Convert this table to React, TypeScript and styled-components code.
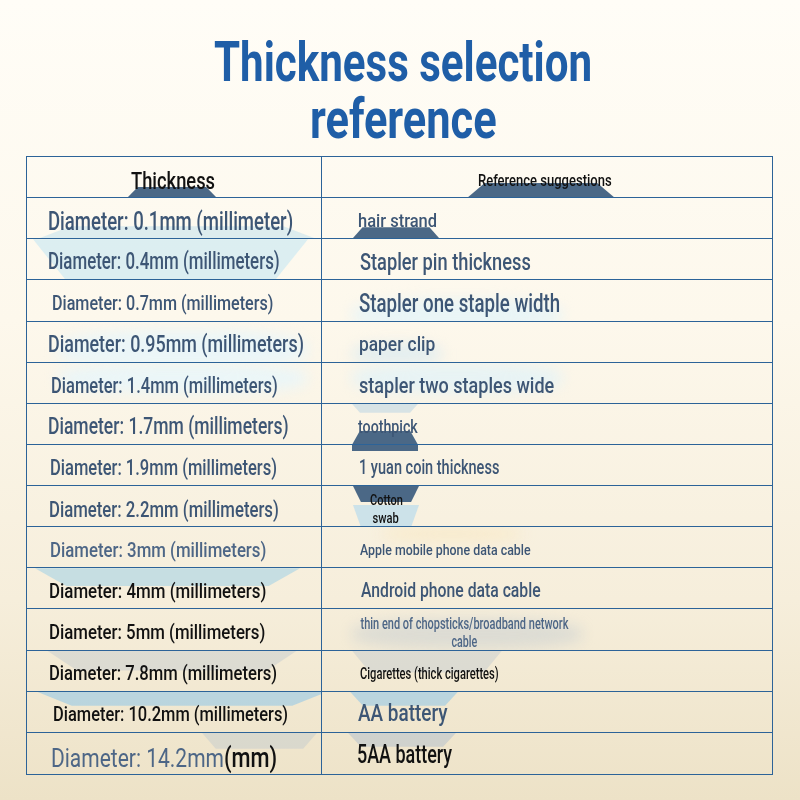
import React, { useLayoutEffect, useRef, useState } from 'react';
import styled, { createGlobalStyle } from 'styled-components';

const GlobalStyle = createGlobalStyle`
  html, body {
    margin: 0;
    padding: 0;
  }
  body {
    font-family: Roboto, "Liberation Sans", sans-serif;
  }
`;

const SLATE = '#3d5675';
const SLATE_LIGHT = '#4d6686';
const INK = '#111111';
const LINE = '#2c6398';

const Page = styled.div`
  width: 800px;
  height: 800px;
  box-sizing: border-box;
  padding: 34px 0 0 26px;
  background: linear-gradient(180deg, #fffdf7 0%, #fdf8ec 40%, #f6eedb 75%, #ede2c7 100%);
  display: flex;
  flex-direction: column;
  overflow: hidden;
`;

const Title = styled.h1`
  margin: 0 0 8px -26px;
  padding-left: 6px;
  width: 800px;
  box-sizing: border-box;
  display: flex;
  flex-direction: column;
  align-items: center;
  color: #1f5ea7;
  font-family: Roboto, "Liberation Sans", sans-serif;
  font-weight: 700;
  font-size: 55px;
  line-height: 57px;
`;

// Box of a fixed width whose text is squeezed horizontally to fill it,
// the reference uses a condensed face that isn't installed here.
const FitBox = styled.span<{ $w: number; $center?: boolean }>`
  position: relative;
  z-index: 1;
  display: inline-flex;
  justify-content: ${({ $center }) => ($center ? 'center' : 'flex-start')};
  width: ${({ $w }) => $w}px;
  flex-shrink: 0;
  white-space: nowrap;
`;

const FitInner = styled.span<{ $center?: boolean }>`
  display: inline-block;
  flex-shrink: 0;
  transform-origin: ${({ $center }) => ($center ? 'center' : 'left')} center;
`;

const Fit: React.FC<{ w: number; center?: boolean; children: React.ReactNode }> = ({ w, center, children }) => {
  const ref = useRef<HTMLSpanElement>(null);
  const [scale, setScale] = useState(0.75);

  useLayoutEffect(() => {
    const measure = () => {
      if (ref.current && ref.current.offsetWidth > 0) setScale(w / ref.current.offsetWidth);
    };
    measure();
    document.fonts?.ready.then(measure);
  }, [w]);

  return (
    <FitBox $w={w} $center={center}>
      <FitInner ref={ref} $center={center} style={{ transform: `scaleX(${scale})` }}>
        {children}
      </FitInner>
    </FitBox>
  );
};

const Table = styled.div`
  width: 747px;
  height: 619px;
  box-sizing: border-box;
  border: 1px solid ${LINE};
  display: grid;
  grid-template-rows: repeat(15, 1fr);
`;

const Row = styled.div<{ $last?: boolean }>`
  display: grid;
  grid-template-columns: 295px 1fr;
  border-bottom: ${({ $last }) => ($last ? 'none' : `1px solid ${LINE}`)};
  min-height: 0;
`;

const Cell = styled.div<{
  $pad: number;
  $size: number;
  $color: string;
  $weight?: number;
  $divider?: boolean;
  $lift?: number;
}>`
  position: relative;
  display: flex;
  align-items: center;
  padding-left: ${({ $pad }) => $pad}px;
  padding-top: ${({ $lift }) => $lift ?? 5}px;
  border-right: ${({ $divider }) => ($divider ? `1px solid ${LINE}` : 'none')};
  font-size: ${({ $size }) => $size}px;
  font-weight: ${({ $weight }) => $weight ?? 500};
  color: ${({ $color }) => $color};
  overflow: hidden;
`;

const Stack = styled.span<{ $w: number; $gap: number }>`
  position: relative;
  z-index: 1;
  display: flex;
  flex-direction: column;
  align-items: center;
  width: ${({ $w }) => $w}px;
  line-height: ${({ $gap }) => $gap}px;
`;

const Unit = styled.span`
  color: ${INK};
  font-size: 27px;
  font-weight: 500;
`;

const Blob = styled.span<{
  $left: number;
  $top: number;
  $w: number;
  $h: number;
  $tone: string;
  $shape?: 'dome' | 'bowl' | 'soft';
}>`
  position: absolute;
  left: ${({ $left }) => $left}px;
  top: ${({ $top }) => $top}px;
  width: ${({ $w }) => $w}px;
  height: ${({ $h }) => $h}px;
  background: ${({ $tone }) => $tone};
  clip-path: ${({ $shape }) =>
    $shape === 'dome'
      ? 'polygon(12% 0, 88% 0, 100% 100%, 0 100%)'
      : $shape === 'bowl'
      ? 'polygon(0 0, 100% 0, 88% 100%, 12% 100%)'
      : 'none'};
  border-radius: ${({ $shape }) => ($shape === 'soft' ? '40%' : '0')};
  filter: ${({ $shape }) => ($shape === 'soft' ? 'blur(7px)' : 'none')};
  z-index: 0;
`;

type Deco = { left: number; top: number; w: number; h: number; tone: string; shape?: 'dome' | 'bowl' | 'soft' };

type Side = {
  text: React.ReactNode;
  size: number;
  color: string;
  x: number;
  w: number;
  weight?: number;
  lift?: number;
  raw?: boolean;
};

type Entry = { left: Side; right: Side; leftDeco?: Deco[]; rightDeco?: Deco[] };

const DARK = '#4b6886';
const PALE_GREY = 'rgba(178, 192, 206, 0.35)';
const PALE_BLUE = 'rgba(150, 205, 232, 0.5)';

const LEFT0 = 27;
const RIGHT0 = 322;

const rows: Entry[] = [
  {
    left: { text: 'Thickness', size: 24, color: INK, x: 131, w: 84, lift: 8 },
    right: { text: 'Reference suggestions', size: 17, color: INK, x: 478, w: 134, lift: 6 },
    leftDeco: [{ left: 100, top: 30, w: 90, h: 11, tone: DARK, shape: 'dome' }],
    rightDeco: [{ left: 145, top: 26, w: 148, h: 15, tone: DARK, shape: 'dome' }],
  },
  {
    left: { text: 'Diameter: 0.1mm (millimeter)', size: 25, color: SLATE, x: 48, w: 245, lift: 6 },
    right: { text: 'hair strand', size: 19, color: SLATE, x: 358, w: 79 },
    leftDeco: [{ left: 10, top: 28, w: 280, h: 13, tone: 'rgba(212, 232, 238, 0.8)', shape: 'dome' }],
    rightDeco: [{ left: 30, top: 29, w: 88, h: 12, tone: DARK, shape: 'dome' }],
  },
  {
    left: { text: 'Diameter: 0.4mm (millimeters)', size: 23, color: SLATE, x: 48, w: 232 },
    right: { text: 'Stapler pin thickness', size: 24, color: SLATE, x: 360, w: 171 },
    leftDeco: [{ left: 6, top: 0, w: 275, h: 41, tone: 'rgba(205, 234, 242, 0.7)', shape: 'bowl' }],
  },
  {
    left: { text: 'Diameter: 0.7mm (millimeters)', size: 20, color: SLATE, x: 52, w: 221 },
    right: { text: 'Stapler one staple width', size: 26, color: SLATE, x: 359, w: 201 },
    rightDeco: [{ left: 30, top: 20, w: 210, h: 30, tone: 'rgba(228, 244, 249, 0.8)', shape: 'soft' }],
  },
  {
    left: { text: 'Diameter: 0.95mm (millimeters)', size: 23.5, color: SLATE, x: 48, w: 256 },
    right: { text: 'paper clip', size: 21, color: SLATE, x: 359, w: 76 },
    leftDeco: [{ left: 30, top: 8, w: 250, h: 40, tone: 'rgba(232, 246, 250, 0.85)', shape: 'soft' }],
    rightDeco: [{ left: 30, top: 22, w: 90, h: 20, tone: 'rgba(215, 233, 242, 0.7)', shape: 'soft' }],
  },
  {
    left: { text: 'Diameter: 1.4mm (millimeters)', size: 22.5, color: SLATE, x: 51, w: 227 },
    right: { text: 'stapler two staples wide', size: 22, color: SLATE, x: 359, w: 195 },
    leftDeco: [{ left: 30, top: 0, w: 250, h: 30, tone: 'rgba(232, 246, 250, 0.85)', shape: 'soft' }],
    rightDeco: [{ left: 30, top: 0, w: 210, h: 30, tone: 'rgba(226, 243, 248, 0.8)', shape: 'soft' }],
  },
  {
    left: { text: 'Diameter: 1.7mm (millimeters)', size: 23.5, color: SLATE, x: 48, w: 241 },
    right: { text: 'toothpick', size: 18, color: SLATE, x: 358, w: 60 },
    rightDeco: [
      { left: 30, top: 0, w: 66, h: 9, tone: 'rgba(200, 220, 228, 0.7)', shape: 'bowl' },
      { left: 30, top: 27, w: 66, h: 14, tone: DARK, shape: 'dome' },
    ],
  },
  {
    left: { text: 'Diameter: 1.9mm (millimeters)', size: 22, color: SLATE, x: 50, w: 227 },
    right: { text: '1 yuan coin thickness', size: 19.5, color: SLATE, x: 359, w: 140 },
    rightDeco: [{ left: 30, top: 0, w: 66, h: 6, tone: DARK }],
  },
  {
    left: { text: 'Diameter: 2.2mm (millimeters)', size: 22.5, color: SLATE, x: 49, w: 230 },
    right: {
      text: (
        <Stack $w={64} $gap={18}>
          <Fit w={33} center>
            Cotton
          </Fit>
          <Fit w={26} center>
            swab
          </Fit>
        </Stack>
      ),
      raw: true,
      size: 15,
      color: INK,
      x: 354,
      w: 64,
      lift: 5,
    },
    rightDeco: [
      { left: 31, top: 0, w: 66, h: 16, tone: DARK, shape: 'bowl' },
      { left: 31, top: 19, w: 66, h: 22, tone: 'rgba(185, 220, 236, 0.7)', shape: 'bowl' },
    ],
  },
  {
    left: { text: 'Diameter: 3mm (millimeters)', size: 21, color: SLATE_LIGHT, x: 50, w: 216, lift: 6 },
    right: { text: 'Apple mobile phone data cable', size: 15.5, color: SLATE, x: 360, w: 171 },
    rightDeco: [{ left: 60, top: 0, w: 140, h: 14, tone: 'rgba(250, 228, 180, 0.45)', shape: 'soft' }],
  },
  {
    left: { text: 'Diameter: 4mm (millimeters)', size: 21, color: INK, x: 49, w: 217 },
    right: { text: 'Android phone data cable', size: 19.5, color: SLATE, x: 361, w: 180 },
    leftDeco: [{ left: 8, top: 0, w: 265, h: 18, tone: PALE_BLUE, shape: 'bowl' }],
  },
  {
    left: { text: 'Diameter: 5mm (millimeters)', size: 21, color: INK, x: 49, w: 216 },
    right: {
      text: (
        <Stack $w={208} $gap={18}>
          <Fit w={208} center>
            thin end of chopsticks/broadband network
          </Fit>
          <Fit w={26} center>
            cable
          </Fit>
        </Stack>
      ),
      raw: true,
      size: 16,
      color: SLATE_LIGHT,
      x: 360,
      w: 208,
      lift: 6,
    },
    rightDeco: [{ left: 30, top: 10, w: 230, h: 30, tone: PALE_GREY, shape: 'soft' }],
  },
  {
    left: { text: 'Diameter: 7.8mm (millimeters)', size: 21, color: INK, x: 49, w: 228 },
    right: { text: 'Cigarettes (thick cigarettes)', size: 16, color: INK, x: 360, w: 139 },
    leftDeco: [{ left: 20, top: 0, w: 250, h: 20, tone: PALE_GREY, shape: 'bowl' }],
    rightDeco: [{ left: 30, top: 0, w: 150, h: 22, tone: PALE_GREY, shape: 'bowl' }],
  },
  {
    left: { text: 'Diameter: 10.2mm (millimeters)', size: 21, color: INK, x: 53, w: 235 },
    right: { text: 'AA battery', size: 24, color: SLATE, x: 358, w: 90, lift: 2 },
    leftDeco: [{ left: 10, top: 0, w: 290, h: 14, tone: 'rgba(150, 200, 230, 0.6)', shape: 'bowl' }],
    rightDeco: [{ left: 28, top: 0, w: 108, h: 14, tone: 'rgba(150, 200, 230, 0.6)', shape: 'bowl' }],
  },
  {
    left: {
      text: (
        <>
          Diameter: 14.2mm<Unit>(mm)</Unit>
        </>
      ),
      size: 26,
      weight: 400,
      color: SLATE_LIGHT,
      x: 51,
      w: 226,
      lift: 9,
    },
    right: { text: '5AA battery', size: 25.5, color: INK, x: 357, w: 95, lift: 1 },
    leftDeco: [{ left: 175, top: 0, w: 115, h: 16, tone: PALE_GREY, shape: 'bowl' }],
    rightDeco: [{ left: 26, top: 0, w: 108, h: 14, tone: 'rgba(175, 190, 205, 0.5)', shape: 'bowl' }],
  },
];

const renderDeco = (items?: Deco[]) =>
  items?.map((d, i) => (
    <Blob key={i} $left={d.left} $top={d.top} $w={d.w} $h={d.h} $tone={d.tone} $shape={d.shape} />
  ));

const renderSide = (side: Side) => (side.raw ? side.text : <Fit w={side.w}>{side.text}</Fit>);

const App: React.FC = () => {
  return (
    <>
      <GlobalStyle />
      <Page>
        <Title>
          <Fit w={378} center>
            Thickness selection
          </Fit>
          <Fit w={187} center>
            reference
          </Fit>
        </Title>
        <Table>
          {rows.map((row, i) => (
            <Row key={i} $last={i === rows.length - 1}>
              <Cell
                $divider
                $pad={row.left.x - LEFT0}
                $size={row.left.size}
                $weight={row.left.weight}
                $color={row.left.color}
                $lift={row.left.lift}
              >
                {renderDeco(row.leftDeco)}
                {renderSide(row.left)}
              </Cell>
              <Cell
                $pad={row.right.x - RIGHT0}
                $size={row.right.size}
                $weight={row.right.weight}
                $color={row.right.color}
                $lift={row.right.lift}
              >
                {renderDeco(row.rightDeco)}
                {renderSide(row.right)}
              </Cell>
            </Row>
          ))}
        </Table>
      </Page>
    </>
  );
};

export default App;
